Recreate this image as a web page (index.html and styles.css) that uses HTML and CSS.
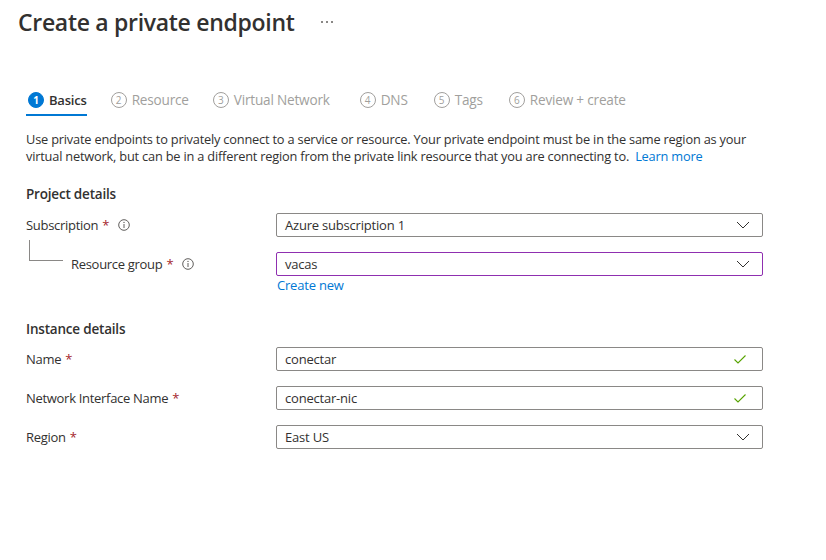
FILE: index.html
```html
<!DOCTYPE html>
<html>
<head>
<meta charset="utf-8">
<link rel="stylesheet" href="styles.css">
</head>
<body>
<div class="page">
  <header class="header">
    <h1 class="title">Create a private endpoint</h1>
    <svg class="more" width="14" height="4" viewBox="0 0 14 4"><rect x="1" y="1" width="2" height="2" fill="#8a8886"/><rect x="6" y="1" width="2" height="2" fill="#8a8886"/><rect x="11" y="1" width="2" height="2" fill="#8a8886"/></svg>
  </header>

  <nav class="steps">
    <div class="step active"><span class="num">1</span><span class="lbl">Basics</span></div>
    <div class="step"><span class="num">2</span><span class="lbl">Resource</span></div>
    <div class="step"><span class="num">3</span><span class="lbl">Virtual Network</span></div>
    <div class="step wide"><span class="num">4</span><span class="lbl">DNS</span></div>
    <div class="step late"><span class="num">5</span><span class="lbl">Tags</span></div>
    <div class="step late"><span class="num">6</span><span class="lbl">Review + create</span></div>
  </nav>

  <p class="intro">Use private endpoints to privately connect to a service or resource. Your private endpoint must be in the same region as your virtual network, but can be in a different region from the private link resource that you are connecting to.<a class="link learn">Learn more</a></p>

  <h2 class="section">Project details</h2>

  <div class="row first">
    <div class="label">Subscription <span class="req">*</span>
      <svg class="info" width="12" height="12" viewBox="0 0 12 12"><circle cx="6" cy="6" r="5.3" fill="none" stroke="#605e5c" stroke-width="1"/><line x1="6" y1="5" x2="6" y2="9" stroke="#605e5c" stroke-width="1"/><circle cx="6" cy="3.4" r="0.7" fill="#605e5c"/></svg>
    </div>
    <div class="field">
      <div class="box">Azure subscription 1<svg class="chev" width="14" height="8" viewBox="0 0 14 8"><polyline points="1,1 7,7 13,1" fill="none" stroke="#323130" stroke-width="1"/></svg></div>
    </div>
  </div>

  <div class="row">
    <div class="label indent"><span class="tree"></span>Resource group <span class="req">*</span>
      <svg class="info" width="12" height="12" viewBox="0 0 12 12"><circle cx="6" cy="6" r="5.3" fill="none" stroke="#605e5c" stroke-width="1"/><line x1="6" y1="5" x2="6" y2="9" stroke="#605e5c" stroke-width="1"/><circle cx="6" cy="3.4" r="0.7" fill="#605e5c"/></svg>
    </div>
    <div class="field">
      <div class="box focus">vacas<svg class="chev" width="14" height="8" viewBox="0 0 14 8"><polyline points="1,1 7,7 13,1" fill="none" stroke="#323130" stroke-width="1"/></svg></div>
      <a class="link create">Create new</a>
    </div>
  </div>

  <h2 class="section inst">Instance details</h2>

  <div class="row first tight">
    <div class="label">Name <span class="req">*</span></div>
    <div class="field">
      <div class="box">conectar<svg class="check" width="12" height="9" viewBox="0 0 12 9"><polyline points="0.5,4.5 4,8 11.5,0.5" fill="none" stroke="#57a300" stroke-width="1.1"/></svg></div>
    </div>
  </div>

  <div class="row">
    <div class="label">Network Interface Name <span class="req">*</span></div>
    <div class="field">
      <div class="box">conectar-nic<svg class="check" width="12" height="9" viewBox="0 0 12 9"><polyline points="0.5,4.5 4,8 11.5,0.5" fill="none" stroke="#57a300" stroke-width="1.1"/></svg></div>
    </div>
  </div>

  <div class="row">
    <div class="label">Region <span class="req">*</span></div>
    <div class="field">
      <div class="box">East US<svg class="chev" width="14" height="8" viewBox="0 0 14 8"><polyline points="1,1 7,7 13,1" fill="none" stroke="#323130" stroke-width="1"/></svg></div>
    </div>
  </div>
</div>
</body>
</html>
```
FILE: styles.css
```css
* { box-sizing: border-box; }
html, body { margin: 0; padding: 0; background: #fff; }
body {
  font-family: "Open Sans", "Noto Sans", sans-serif;
  font-size: 13px;
  color: #323130;
  width: 826px;
  height: 560px;
  overflow: hidden;
}
.page { padding: 0 0 0 26px; }

.header {
  display: flex;
  align-items: center;
  margin-left: -8px;
  height: 44px;
}
.title {
  margin: 0;
  font-size: 23px;
  font-weight: 600;
  letter-spacing: -0.3px;
  color: #323130;
}
.more {
  margin-left: 25px;
}

.steps {
  display: flex;
  gap: 22px;
  margin-top: 41px;
  height: 31px;
  align-items: stretch;
}
.step {
  display: flex;
  align-items: center;
  gap: 5px;
  color: #a19f9d;
  font-size: 13.6px;
  padding: 0 0 0 2px;
  border-bottom: 2px solid transparent;
  letter-spacing: -0.2px;
}
.step.wide { margin-left: 6px; }
.step.late { margin-left: 2px; }
.step .num {
  width: 16px;
  height: 16px;
  border: 1px solid #a19f9d;
  border-radius: 50%;
  display: flex;
  align-items: center;
  justify-content: center;
  font-size: 10px;
  letter-spacing: 0;
}
.step.active {
  color: #323130;
  font-weight: 600;
  font-size: 13px;
  border-bottom-color: #0078d4;
}
.step.active .num {
  background: #0078d4;
  border-color: #0078d4;
  color: #fff;
  font-weight: 700;
}

.intro {
  margin: 15px 0 0;
  width: 730px;
  line-height: 17px;
  font-size: 12.8px;
  letter-spacing: -0.2px;
}
.link { color: #0078d4; text-decoration: none; }
.learn { margin-left: 6px; }

.section {
  margin: 19px 0 0;
  font-size: 13.5px;
  font-weight: 600;
  letter-spacing: -0.2px;
  height: 20px;
  line-height: 20px;
}
.section.inst { margin-top: 25px; }

.row {
  display: flex;
  margin-top: 15px;
  width: 737px;
}
.row.first { margin-top: 9px; }
.row.first.tight { margin-top: 8px; }
.label {
  width: 250px;
  flex: none;
  display: flex;
  align-items: center;
  height: 24px;
  letter-spacing: -0.3px;
}
.label .req { color: #a4262c; margin-left: 4px; }
.info { margin-left: 9px; }
.label.indent { padding-left: 45px; position: relative; }
.tree {
  position: absolute;
  left: 3px;
  top: -12px;
  width: 34px;
  height: 21px;
  border-left: 1px solid #8a8886;
  border-bottom: 1px solid #8a8886;
}
.field { flex: 1; }
.box {
  height: 24px;
  border: 1px solid #8a8886;
  border-radius: 2px;
  padding: 0 12px 0 8px;
  display: flex;
  align-items: center;
  justify-content: space-between;
  letter-spacing: -0.2px;
}
.box.focus { border-color: #8f2fb0; }
.check { margin-right: 4px; }
.create {
  display: block;
  margin-top: 1px;
  line-height: 17px;
  padding-left: 1px;
  letter-spacing: -0.2px;
}
```
